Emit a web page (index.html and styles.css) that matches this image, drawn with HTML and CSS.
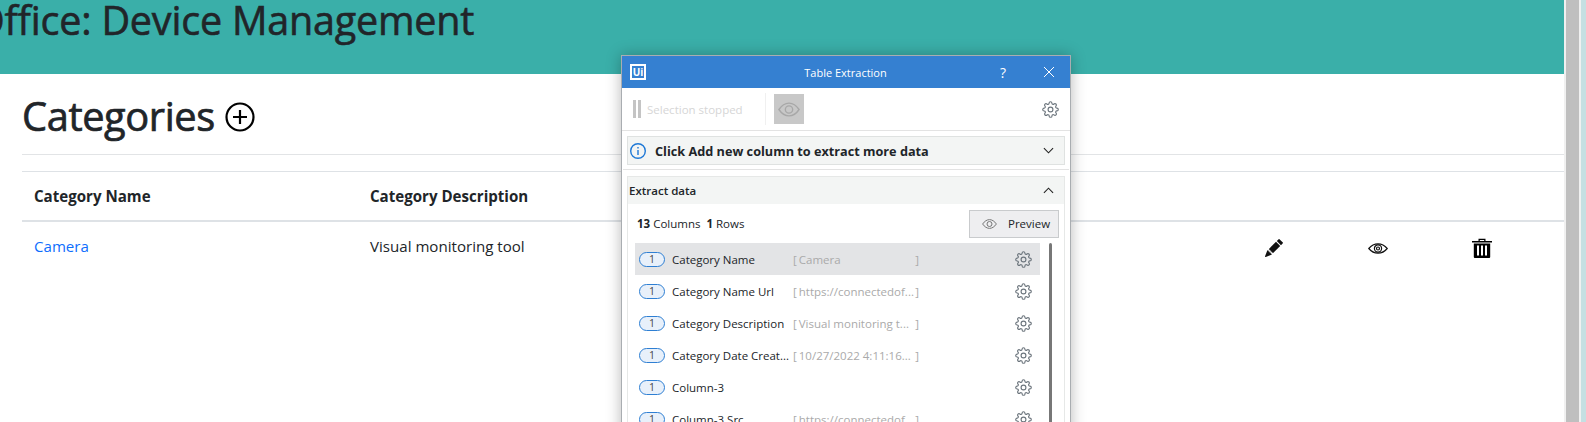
FILE: index.html
```html
<!DOCTYPE html>
<html>
<head>
    <meta charset="utf-8" />
    <title>Categories</title>
    <link rel="stylesheet" href="styles.css">
</head>
<body>
    <svg class="defs" width="0" height="0">
        <symbol id="gear" viewBox="0 0 24 24">
            <circle cx="12" cy="12" r="3.4" />
            <path d="M19.4 15a1.65 1.65 0 0 0 .33 1.82l.06.06a2 2 0 0 1 0 2.83 2 2 0 0 1-2.83 0l-.06-.06a1.65 1.65 0 0 0-1.82-.33 1.65 1.65 0 0 0-1 1.51V21a2 2 0 0 1-2 2 2 2 0 0 1-2-2v-.09A1.65 1.65 0 0 0 9 19.4a1.65 1.65 0 0 0-1.82.33l-.06.06a2 2 0 0 1-2.83 0 2 2 0 0 1 0-2.83l.06-.06a1.65 1.65 0 0 0 .33-1.82 1.65 1.65 0 0 0-1.51-1H3a2 2 0 0 1-2-2 2 2 0 0 1 2-2h.09A1.65 1.65 0 0 0 4.6 9a1.65 1.65 0 0 0-.33-1.82l-.06-.06a2 2 0 0 1 0-2.83 2 2 0 0 1 2.83 0l.06.06a1.65 1.65 0 0 0 1.82.33H9a1.65 1.65 0 0 0 1-1.51V3a2 2 0 0 1 2-2 2 2 0 0 1 2 2v.09a1.65 1.65 0 0 0 1 1.51 1.65 1.65 0 0 0 1.82-.33l.06-.06a2 2 0 0 1 2.83 0 2 2 0 0 1 0 2.83l-.06.06a1.65 1.65 0 0 0-.33 1.82V9a1.65 1.65 0 0 0 1.51 1H21a2 2 0 0 1 2 2 2 2 0 0 1-2 2h-.09a1.65 1.65 0 0 0-1.51 1z" />
        </symbol>
        <symbol id="eye" viewBox="0 0 24 16">
            <path d="M1 8C4 3.5 8 1 12 1s8 2.500 11 7c-3 4.500-7 7-11 7S4 12.500 1 8z" />
            <circle cx="12" cy="8" r="4" />
        </symbol>
    </svg>

    <div class="page">
        <main class="content">
            <header class="banner">
                <h1 class="banner-title">Office: Device Management</h1>
            </header>
            <div class="section">
                <div class="section-head">
                    <h2 class="section-title">Categories</h2>
                    <svg class="add-icon" viewBox="0 0 30 30">
                        <circle cx="15" cy="15" r="13.500" />
                        <path d="M15 8v14M8 15h14" />
                    </svg>
                </div>
                <div class="table">
                    <div class="table-row table-top">
                        <div class="cell cell-head">Category Name</div>
                        <div class="cell cell-head">Category Description</div>
                    </div>
                    <div class="table-row">
                        <div class="cell"><a class="cat-link" href="#">Camera</a></div>
                        <div class="cell">Visual monitoring tool</div>
                        <div class="cell cell-icon">
                            <svg class="act-pencil" viewBox="0 0 16 16">
                                <path d="M12.854.146a.5.5 0 0 0-.707 0L10.500 1.793 14.207 5.500l1.647-1.646a.5.5 0 0 0 0-.708l-3-3zm.646 6.061L9.793 2.500 3.293 9H3.500a.5.5 0 0 1 .5.5v.5h.5a.5.5 0 0 1 .5.5v.5h.5a.5.5 0 0 1 .5.5v.5h.5a.5.5 0 0 1 .5.5v.207l6.500-6.500zm-7.468 7.468A.5.5 0 0 1 6 13.500V13h-.5a.5.5 0 0 1-.5-.5V12h-.5a.5.5 0 0 1-.5-.5V11h-.5a.5.5 0 0 1-.5-.5V10h-.5a.499.499 0 0 1-.175-.032l-.179.178a.5.5 0 0 0-.11.168l-2 5a.5.5 0 0 0 .65.65l5-2a.5.5 0 0 0 .168-.11l.178-.178z" />
                            </svg>
                        </div>
                        <div class="cell cell-icon">
                            <svg class="act-eye" viewBox="0 0 20 11">
                                <path d="M.8 5.500C3.500 2.200 6.500.8 10 .8s6.500 1.400 9.200 4.700c-2.700 3.300-5.700 4.700-9.200 4.700S3.500 8.800.8 5.500z" />
                                <circle cx="10" cy="5.500" r="3.600" />
                                <circle cx="10" cy="5.500" r="1.500" />
                            </svg>
                        </div>
                        <div class="cell cell-icon">
                            <svg class="act-trash" viewBox="0 0 20 20">
                                <path d="M0 3h20v1.400H0zM6.500 3V.7h7V3h-1.300V1.900H7.800V3z" />
                                <path fill-rule="evenodd" d="M1.800 5.500h16.400V19a1 1 0 0 1-1 1H2.800a1 1 0 0 1-1-1zM5 7.500v10h2v-10zm4 0v10h2v-10zm4 0v10h2v-10z" />
                            </svg>
                        </div>
                    </div>
                </div>
            </div>

            <section class="dialog">
                <div class="dialog-bar">
                    <span class="ui-logo">Ui</span>
                    <span class="dialog-title">Table Extraction</span>
                    <span class="dialog-help">?</span>
                    <svg class="dialog-close" viewBox="0 0 12 12"><path d="M1 1l10 10M11 1L1 11" /></svg>
                </div>
                <div class="toolbar">
                    <span class="pause"><i></i><i></i></span>
                    <span class="toolbar-text">Selection stopped</span>
                    <span class="toolbar-sep"></span>
                    <span class="eye-btn"><svg class="eye-big"><use href="#eye" /></svg></span>
                    <svg class="gear gear-top"><use href="#gear" /></svg>
                </div>
                <div class="notice">
                    <svg class="info-icon" viewBox="0 0 16 16">
                        <circle cx="8" cy="8" r="7.300" />
                        <path d="M8 7v5M8 4v1.500" />
                    </svg>
                    <span class="notice-text">Click Add new column to extract more data</span>
                    <svg class="chevron" viewBox="0 0 12 7"><path d="M1 1l5 5 5-5" /></svg>
                </div>
                <div class="panel">
                    <div class="panel-head">
                        <span>Extract data</span>
                        <svg class="chevron" viewBox="0 0 12 7"><path d="M1 6l5-5 5 5" /></svg>
                    </div>
                    <div class="panel-info">
                        <span><b>13</b> Columns &nbsp;<b>1</b> Rows</span>
                        <span class="preview-btn"><svg class="eye-small"><use href="#eye" /></svg>Preview</span>
                    </div>
                    <div class="list-wrap">
                        <div class="col-list">
                            <div class="col-row col-row-on">
                                <span class="pill">1</span>
                                <span class="col-name">Category Name</span>
                                <span class="col-val"><em>[</em><span class="col-text">Camera</span><em>]</em></span>
                                <svg class="gear"><use href="#gear" /></svg>
                            </div>
                            <div class="col-row">
                                <span class="pill">1</span>
                                <span class="col-name">Category Name Url</span>
                                <span class="col-val"><em>[</em><span class="col-text">https://connectedof...</span><em>]</em></span>
                                <svg class="gear"><use href="#gear" /></svg>
                            </div>
                            <div class="col-row">
                                <span class="pill">1</span>
                                <span class="col-name">Category Description</span>
                                <span class="col-val"><em>[</em><span class="col-text">Visual monitoring t...</span><em>]</em></span>
                                <svg class="gear"><use href="#gear" /></svg>
                            </div>
                            <div class="col-row">
                                <span class="pill">1</span>
                                <span class="col-name">Category Date Creat...</span>
                                <span class="col-val"><em>[</em><span class="col-text">10/27/2022 4:11:16...</span><em>]</em></span>
                                <svg class="gear"><use href="#gear" /></svg>
                            </div>
                            <div class="col-row">
                                <span class="pill">1</span>
                                <span class="col-name">Column-3</span>
                                <span class="col-val"></span>
                                <svg class="gear"><use href="#gear" /></svg>
                            </div>
                            <div class="col-row">
                                <span class="pill">1</span>
                                <span class="col-name">Column-3 Src</span>
                                <span class="col-val"><em>[</em><span class="col-text">https://connectedof...</span><em>]</em></span>
                                <svg class="gear"><use href="#gear" /></svg>
                            </div>
                        </div>
                        <div class="list-scroll"></div>
                    </div>
                </div>
            </section>
        </main>

        <div class="scroll-strip"><div class="scroll-thumb"></div></div>
        <div class="next-window"></div>
    </div>
</body>
</html>
```

FILE: styles.css
```css
* {
    box-sizing: border-box;
}

html, body {
    margin: 0;
    height: 422px;
    overflow: hidden;
}

body {
    font-family: "Open Sans", "Noto Sans", sans-serif;
    color: #212529;
    background: #fff;
}

.defs {
    position: absolute;
}

.page {
    display: flex;
    height: 422px;
}

.content {
    position: relative;
    width: 1564px;
    overflow: hidden;
}

.banner {
    height: 74px;
    background: #3aafa9;
    overflow: hidden;
}

.banner-title {
    margin: -6px 0 0 -26px;
    font-size: 39.500px;
    line-height: 52px;
    font-weight: 400;
    white-space: nowrap;
    letter-spacing: -0.2px;
    -webkit-text-stroke: 0.6px #212529;
}

.section {
    padding-left: 22px;
}

.section-head {
    display: flex;
    align-items: center;
    gap: 10px;
    height: 81px;
    padding-top: 3px;
    border-bottom: 1px solid #e2e4e6;
}

.section-title {
    margin: 0;
    font-size: 39.800px;
    font-weight: 400;
    letter-spacing: -0.4px;
    -webkit-text-stroke: 0.7px #212529;
}

.add-icon {
    width: 30px;
    height: 30px;
    margin-top: 3px;
    fill: none;
    stroke: #000;
    stroke-width: 2.2;
}

.table {
    margin-top: 16px;
    border-top: 1px solid #dee2e6;
}

.table-row {
    display: grid;
    grid-template-columns: 336px 864px 104px 104px 104px;
    align-items: center;
}

.table-top {
    height: 50px;
    border-bottom: 2px solid #dee2e6;
}

.cell {
    padding: 0 12px;
    font-size: 15.100px;
}

.table-row + .table-row .cell {
    height: 50px;
    display: flex;
    align-items: center;
}

.cell-head {
    font-weight: 700;
}

.table-row + .table-row .cell:nth-child(-n+2) {
    padding-bottom: 2px;
}

.table-row + .table-row .cell-icon {
    justify-content: center;
}

.cat-link {
    color: #0d6efd;
    text-decoration: none;
}

.act-pencil {
    width: 18px;
    height: 18px;
    fill: #111;
    margin-top: 2px;
}

.act-eye {
    width: 20px;
    height: 11px;
    fill: none;
    stroke: #111;
    stroke-width: 1.200;
    margin-top: 2px;
}

.act-trash {
    width: 20px;
    height: 20px;
    fill: #000;
    margin-top: 1px;
}

/* floating extraction window */
.dialog {
    position: absolute;
    left: 621px;
    top: 55px;
    width: 450px;
    height: 400px;
    background: #fff;
    border: 1px solid #a9adb1;
    box-shadow: 0 0 14px rgba(0, 0, 0, 0.28);
    font-size: 12px;
}

.dialog-bar {
    position: relative;
    display: flex;
    align-items: center;
    height: 32px;
    padding-left: 8px;
    background: #3580d1;
    color: #fff;
}

.ui-logo {
    width: 16px;
    height: 16px;
    border: 2px solid #fff;
    font-size: 10px;
    font-weight: 700;
    line-height: 12px;
    text-align: center;
}

.dialog-title {
    position: absolute;
    left: 0;
    right: 0;
    text-align: center;
    font-size: 11px;
    margin-left: -1px;
}

.dialog-help {
    margin-left: auto;
    font-size: 14px;
    margin-right: 3px;
}

.dialog-close {
    width: 12px;
    height: 12px;
    margin: 0 15px 0 34px;
    fill: none;
    stroke: #fff;
    stroke-width: 1;
}

.toolbar {
    display: flex;
    align-items: center;
    height: 43px;
    padding-left: 11px;
    border-bottom: 1px solid #e3e3e3;
}

.pause {
    display: flex;
    gap: 2px;
}

.pause i {
    width: 3px;
    height: 18px;
    background: #c4c4c4;
}

.toolbar-text {
    margin-left: 6px;
    color: #d6d6d6;
    font-size: 11.500px;
}

.toolbar-sep {
    width: 1px;
    height: 32px;
    margin-left: 22px;
    background: #f0f0f0;
}

.eye-btn {
    display: flex;
    align-items: center;
    justify-content: center;
    width: 30px;
    height: 30px;
    margin-left: 8px;
    background: #c8c8c8;
}

.eye-big {
    width: 22px;
    height: 15px;
    fill: none;
    stroke: #a8a8a8;
    stroke-width: 1.500;
}

.gear {
    width: 17px;
    height: 17px;
    margin-left: auto;
    fill: none;
    stroke: #6c757d;
    stroke-width: 1.600;
}

.gear-top {
    margin-right: 11px;
}

.notice {
    display: flex;
    align-items: center;
    height: 29px;
    margin: 5px 5px 5px;
    padding: 0 10px 0 2px;
    background: #f3f5f4;
    border: 1px solid #dfe2e1;
    font-weight: 700;
    font-size: 12.700px;
    position: relative;
}

.notice::after {
    content: "";
    position: absolute;
    left: -5px;
    right: -5px;
    bottom: -6px;
    height: 1px;
    background: #e3e3e3;
}

.info-icon {
    width: 16px;
    height: 16px;
    margin-right: 9px;
    fill: none;
    stroke: #1e78d6;
    stroke-width: 1.400;
}

.chevron {
    width: 11px;
    height: 7px;
    margin-left: auto;
    fill: none;
    stroke: #222;
    stroke-width: 1.200;
}

.panel {
    margin: 11px 5px 0;
    border: 1px solid #e6e8e7;
    border-bottom: 0;
    height: 300px;
}

.panel-head {
    display: flex;
    align-items: center;
    height: 27px;
    padding: 0 10px 0 1px;
    background: #f3f5f4;
    font-size: 11.500px;
    font-weight: 600;
}

.panel-info {
    display: flex;
    align-items: center;
    justify-content: space-between;
    height: 39px;
    padding: 0 5px 0 9px;
    font-size: 11.500px;
}

.preview-btn {
    display: flex;
    align-items: center;
    gap: 11px;
    width: 90px;
    height: 28px;
    padding-left: 12px;
    background: #eeeef0;
    border: 1px solid #c9cbcd;
    font-size: 11.500px;
}

.eye-small {
    width: 15px;
    height: 10px;
    fill: none;
    stroke: #777;
    stroke-width: 1.600;
}

.list-wrap {
    display: flex;
    padding-left: 7px;
}

.col-list {
    width: 405px;
}

.col-row {
    display: flex;
    align-items: center;
    height: 32px;
    padding: 0 8px 0 4px;
}

.col-row-on {
    background: #e3e4e6;
}

.pill {
    flex: none;
    width: 26px;
    height: 15px;
    border: 1px solid #2e7fd3;
    border-radius: 8px;
    background: #e8f0fa;
    color: #444;
    font-size: 10.500px;
    line-height: 13px;
    text-align: center;
}

.col-name {
    width: 121px;
    margin-left: 7px;
    font-size: 11.500px;
    white-space: nowrap;
    overflow: hidden;
    padding-top: 1px;
}

.col-val {
    display: flex;
    justify-content: space-between;
    width: 126px;
    color: #aaa;
    font-size: 11.500px;
    white-space: nowrap;
    padding-top: 1px;
}

.col-val em {
    font-style: normal;
}

.col-text {
    flex: 1;
    margin-left: 2px;
}

.list-scroll {
    width: 3px;
    height: 180px;
    margin-left: 9px;
    background: #777;
    border-radius: 2px;
}

/* window scrollbar and the window behind */
.scroll-strip {
    width: 17px;
    padding: 0 2px;
    background: #f0f0f0;
}

.scroll-thumb {
    height: 100%;
    background: #bfbfbf;
}

.next-window {
    flex: 1;
    background: #c5dfe2;
}
```
